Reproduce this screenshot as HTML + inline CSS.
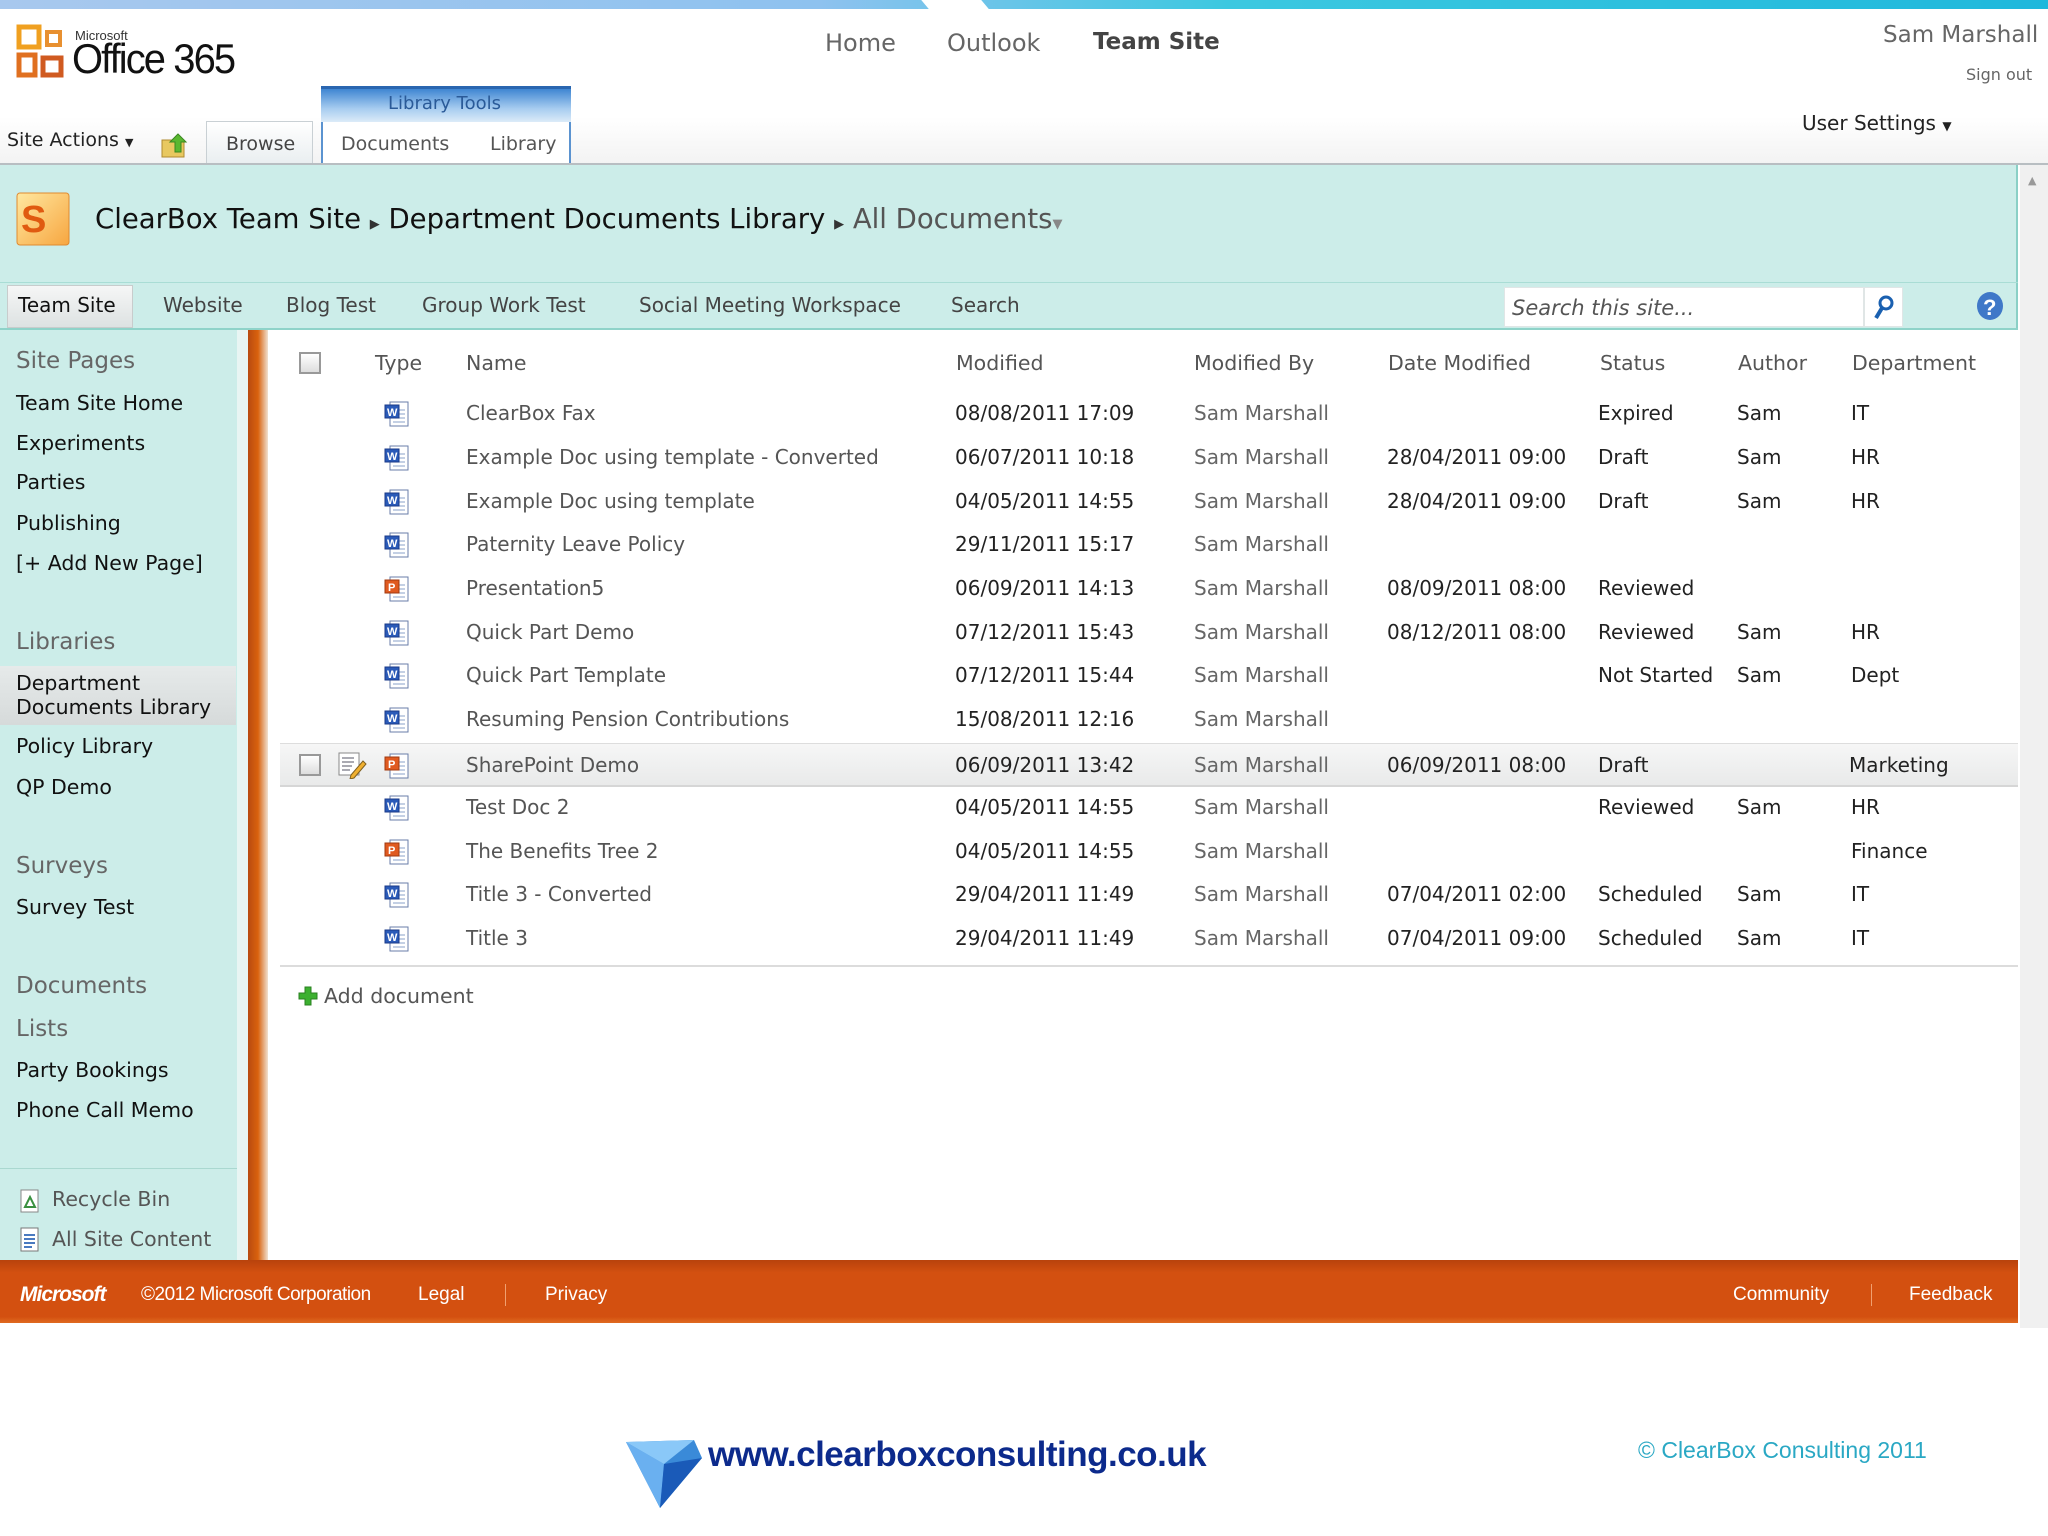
<!DOCTYPE html>
<html><head><meta charset="utf-8">
<style>
*{margin:0;padding:0;box-sizing:border-box}
body{width:2048px;height:1536px;position:relative;background:#fff;font-family:"DejaVu Sans",Verdana,sans-serif;overflow:hidden;color:#222}
.a{position:absolute;white-space:nowrap}
.seg{font-family:"Liberation Sans",sans-serif}
.nav .a{font-size:20px;color:#444;top:293px}
.ln{font-size:20.5px;color:#111;left:16px}
.lh{font-size:23px;color:#666;left:16px}
.row{position:absolute;left:280px;width:1738px;height:44px;font-size:20px}
.row span{position:absolute;top:9px;white-space:nowrap}
.c1{left:186px;color:#555}.c2{left:675px;color:#222}.c3{left:914px;color:#666}.c4{left:1107px}.c5{left:1318px}.c6{left:1457px}.c7{left:1571px}
.ic{position:absolute;left:104px;top:8px;width:26px;height:28px}
</style></head><body>
<div class="a" style="left:0;top:0;width:2048px;height:9px;background:linear-gradient(90deg,#a8c8ee,#8ec2ef 40%,#3cc8e0 60%,#1fb8dc)"></div>
<div class="a" style="left:925px;top:0;width:60px;height:9px;background:#fff;transform:skewX(40deg)"></div>
<div class="a" style="left:0;top:9px;width:2048px;height:154px;background:linear-gradient(#fff 70%,#f3f3f3)"></div>
<svg class="a" style="left:16px;top:24px" width="56" height="56" viewBox="0 0 56 56">
<rect x="3" y="3" width="20" height="20" fill="none" stroke="#f0a020" stroke-width="5"/>
<rect x="31" y="8" width="13" height="13" fill="none" stroke="#e89030" stroke-width="4"/>
<rect x="3" y="31" width="16" height="20" fill="none" stroke="#e07020" stroke-width="5"/>
<rect x="27" y="34" width="18" height="17" fill="none" stroke="#d05a20" stroke-width="5"/>
</svg>
<div class="a seg" style="left:75px;top:28px;font-size:13px;color:#333">Microsoft</div>
<div class="a seg" style="left:72px;top:35px;font-size:42px;color:#111;letter-spacing:-2px;transform:scaleX(.95);transform-origin:left">Office 365</div>
<div class="a" style="left:825px;top:29px;font-size:24px;color:#666">Home</div>
<div class="a" style="left:947px;top:29px;font-size:24px;color:#666">Outlook</div>
<div class="a" style="left:1093px;top:29px;font-size:23px;color:#444;font-weight:bold">Team Site</div>
<div class="a" style="left:1883px;top:22px;font-size:23px;color:#666">Sam Marshall</div>
<div class="a" style="left:1966px;top:65px;font-size:16px;color:#666">Sign out</div>
<div class="a" style="left:1802px;top:111px;font-size:20px;color:#222">User Settings <span style="font-size:12px">▼</span></div>
<div class="a" style="left:7px;top:129px;font-size:19px;color:#222">Site Actions <span style="font-size:11px">▼</span></div>
<svg class="a" style="left:160px;top:130px" width="30" height="30"><rect x="2" y="10" width="22" height="17" fill="#e8c860" stroke="#b08a30"/><path d="M18 4 L26 12 H21 V22 H15 V12 H10 Z" fill="#5ab830" stroke="#3a8820"/></svg>
<div class="a" style="left:206px;top:121px;width:107px;height:43px;background:linear-gradient(#fff,#e9eef0);border:1px solid #c9d0d4;border-bottom:none"></div>
<div class="a" style="left:226px;top:133px;font-size:19px;color:#444">Browse</div>
<div class="a" style="left:321px;top:86px;width:250px;height:78px;border:2px solid #5b93d0;border-bottom:none;background:#fff"></div>
<div class="a" style="left:321px;top:86px;width:250px;height:36px;background:linear-gradient(#3f86d2,#a8cdf0 60%,#dcebf8);border-top:3px solid #2a66b0"></div>
<div class="a" style="left:388px;top:93px;font-size:18px;color:#2a5a98">Library Tools</div>
<div class="a" style="left:341px;top:133px;font-size:19px;color:#555">Documents</div>
<div class="a" style="left:490px;top:133px;font-size:19px;color:#555">Library</div>
<div class="a" style="left:0;top:163px;width:2048px;height:2px;background:#b8bec2"></div>
<div class="a" style="left:0;top:165px;width:2018px;height:165px;background:#ccede9;border-right:2px solid #8ad0c6"></div>
<svg class="a" style="left:16px;top:192px" width="56" height="56"><defs><linearGradient id="g" x1="0" y1="0" x2="1" y2="1"><stop offset="0" stop-color="#ffe8a0"/><stop offset="1" stop-color="#f7a640"/></linearGradient></defs><rect x="1" y="1" width="52" height="52" rx="3" fill="url(#g)" stroke="#e08a30"/><text x="5" y="40" font-family="Liberation Sans" font-weight="bold" font-size="38" fill="#e05a10">S</text></svg>
<div class="a" style="left:95px;top:203px;font-size:27.5px;color:#111">ClearBox Team Site <span style="font-size:13px;color:#333">▶</span> Department Documents Library <span style="font-size:13px;color:#333">▶</span> <span style="color:#555">All Documents</span><span style="font-size:13px;color:#888">▼</span></div>
<div class="a" style="left:0;top:282px;width:2018px;height:1px;background:#a9ddd5"></div>
<div class="a" style="left:0;top:328px;width:2018px;height:2px;background:#8fd3c9"></div>
<div class="nav">
<div class="a" style="left:7px;top:285px;width:126px;height:43px;background:linear-gradient(#f6f6f6,#dde2e2);border:1px solid #c8cccc"></div>
<div class="a" style="left:18px;color:#111">Team Site</div>
<div class="a" style="left:163px">Website</div>
<div class="a" style="left:286px">Blog Test</div>
<div class="a" style="left:422px">Group Work Test</div>
<div class="a" style="left:639px">Social Meeting Workspace</div>
<div class="a" style="left:951px">Search</div>
</div>
<div class="a" style="left:1504px;top:287px;width:360px;height:40px;background:#fff;border:1px solid #e0e6e6"></div>
<div class="a" style="left:1512px;top:296px;font-size:21px;color:#555;font-style:italic">Search this site...</div>
<div class="a" style="left:1864px;top:287px;width:39px;height:40px;background:#fff;border:1px solid #e0e6e6"></div>
<svg class="a" style="left:1872px;top:293px" width="24" height="28"><circle cx="14" cy="10" r="6" fill="none" stroke="#1a60b0" stroke-width="3"/><path d="M10 15 L4 25" stroke="#1a60b0" stroke-width="4"/></svg>
<svg class="a" style="left:1976px;top:291px" width="28" height="30"><ellipse cx="14" cy="15" rx="13" ry="14" fill="#3f78c8"/><text x="7" y="24" font-family="Liberation Sans" font-weight="bold" font-size="22" fill="#fff">?</text></svg>
<div class="a" style="left:2020px;top:165px;width:28px;height:1163px;background:#f0f0f0"></div>
<div class="a" style="left:2028px;top:174px;font-size:11px;color:#999">▲</div>
<div class="a" style="left:0;top:330px;width:237px;height:930px;background:#ccede9"></div>
<div class="a" style="left:237px;top:330px;width:11px;height:930px;background:#e8f5f3"></div>
<div class="a" style="left:248px;top:330px;width:20px;height:930px;background:linear-gradient(90deg,#b84a10,#d9620e 50%,#f0e0d0)"></div>
<div class="a lh" style="top:348px">Site Pages</div>
<div class="a ln" style="top:391px">Team Site Home</div>
<div class="a ln" style="top:431px">Experiments</div>
<div class="a ln" style="top:470px">Parties</div>
<div class="a ln" style="top:511px">Publishing</div>
<div class="a ln" style="top:551px">[+ Add New Page]</div>
<div class="a lh" style="top:629px">Libraries</div>
<div class="a" style="left:0;top:666px;width:236px;height:59px;background:linear-gradient(#e6eaea,#d6dada)"></div>
<div class="a ln" style="top:671px;line-height:24px">Department<br>Documents Library</div>
<div class="a ln" style="top:734px">Policy Library</div>
<div class="a ln" style="top:775px">QP Demo</div>
<div class="a lh" style="top:853px">Surveys</div>
<div class="a ln" style="top:895px">Survey Test</div>
<div class="a lh" style="top:973px">Documents</div>
<div class="a lh" style="top:1016px">Lists</div>
<div class="a ln" style="top:1058px">Party Bookings</div>
<div class="a ln" style="top:1098px">Phone Call Memo</div>
<div class="a" style="left:0;top:1168px;width:237px;height:1px;background:#aad8d0"></div>
<svg class="a" style="left:18px;top:1186px" width="24" height="28"><rect x="3" y="4" width="17" height="22" fill="#fff" stroke="#888"/><path d="M7 21 L12 11 L17 21Z" fill="none" stroke="#3a9040" stroke-width="2"/></svg>
<div class="a" style="left:52px;top:1187px;font-size:20.5px;color:#555">Recycle Bin</div>
<svg class="a" style="left:18px;top:1226px" width="24" height="28"><rect x="3" y="2" width="17" height="23" fill="#fff" stroke="#777"/><path d="M6 9h11M6 13h11M6 17h11M6 21h8" stroke="#4a7ac0" stroke-width="2"/></svg>
<div class="a" style="left:52px;top:1227px;font-size:20.5px;color:#555">All Site Content</div>
<div class="a" style="left:270px;top:330px;width:1748px;height:930px;background:#fff"></div>
<div class="a" style="left:299px;top:352px;width:22px;height:22px;border:2px solid #999;background:linear-gradient(#fff,#ddd)"></div>
<div class="a" style="left:375px;top:351px;font-size:20.5px;color:#555">Type</div>
<div class="a" style="left:466px;top:351px;font-size:20.5px;color:#555">Name</div>
<div class="a" style="left:956px;top:351px;font-size:20.5px;color:#555">Modified</div>
<div class="a" style="left:1194px;top:351px;font-size:20.5px;color:#555">Modified By</div>
<div class="a" style="left:1388px;top:351px;font-size:20.5px;color:#555">Date Modified</div>
<div class="a" style="left:1600px;top:351px;font-size:20.5px;color:#555">Status</div>
<div class="a" style="left:1738px;top:351px;font-size:20.5px;color:#555">Author</div>
<div class="a" style="left:1852px;top:351px;font-size:20.5px;color:#555">Department</div>

<svg width="0" height="0" style="position:absolute"><defs>
<g id="w"><rect x="6" y="2" width="18" height="24" fill="#fff" stroke="#6a7ea8"/><path d="M13 10h8M13 14h8M13 18h8M9 22h12" stroke="#8aa0c8"/><rect x="1" y="5" width="14" height="13" fill="#2a5ab8" stroke="#1a3a88"/><text x="3" y="16" font-size="11" font-weight="bold" fill="#fff" font-family="Liberation Sans">W</text></g>
<g id="p"><rect x="6" y="2" width="18" height="24" fill="#fff" stroke="#6a7ea8"/><path d="M13 10h8M13 14h8M13 18h8M9 22h12" stroke="#8aa0c8"/><rect x="1" y="5" width="14" height="13" fill="#e05a20" stroke="#a03a10"/><text x="4" y="16" font-size="11" font-weight="bold" fill="#fff" font-family="Liberation Sans">P</text></g>
</defs></svg>

<div class="row" style="top:392px"><svg class="ic"><use href="#w"/></svg><span class="c1">ClearBox Fax</span><span class="c2">08/08/2011 17:09</span><span class="c3">Sam Marshall</span><span class="c5">Expired</span><span class="c6">Sam</span><span class="c7">IT</span></div>
<div class="row" style="top:436px"><svg class="ic"><use href="#w"/></svg><span class="c1">Example Doc using template - Converted</span><span class="c2">06/07/2011 10:18</span><span class="c3">Sam Marshall</span><span class="c4">28/04/2011 09:00</span><span class="c5">Draft</span><span class="c6">Sam</span><span class="c7">HR</span></div>
<div class="row" style="top:480px"><svg class="ic"><use href="#w"/></svg><span class="c1">Example Doc using template</span><span class="c2">04/05/2011 14:55</span><span class="c3">Sam Marshall</span><span class="c4">28/04/2011 09:00</span><span class="c5">Draft</span><span class="c6">Sam</span><span class="c7">HR</span></div>
<div class="row" style="top:523px"><svg class="ic"><use href="#w"/></svg><span class="c1">Paternity Leave Policy</span><span class="c2">29/11/2011 15:17</span><span class="c3">Sam Marshall</span></div>
<div class="row" style="top:567px"><svg class="ic"><use href="#p"/></svg><span class="c1">Presentation5</span><span class="c2">06/09/2011 14:13</span><span class="c3">Sam Marshall</span><span class="c4">08/09/2011 08:00</span><span class="c5">Reviewed</span></div>
<div class="row" style="top:611px"><svg class="ic"><use href="#w"/></svg><span class="c1">Quick Part Demo</span><span class="c2">07/12/2011 15:43</span><span class="c3">Sam Marshall</span><span class="c4">08/12/2011 08:00</span><span class="c5">Reviewed</span><span class="c6">Sam</span><span class="c7">HR</span></div>
<div class="row" style="top:654px"><svg class="ic"><use href="#w"/></svg><span class="c1">Quick Part Template</span><span class="c2">07/12/2011 15:44</span><span class="c3">Sam Marshall</span><span class="c5">Not Started</span><span class="c6">Sam</span><span class="c7">Dept</span></div>
<div class="row" style="top:698px"><svg class="ic"><use href="#w"/></svg><span class="c1">Resuming Pension Contributions</span><span class="c2">15/08/2011 12:16</span><span class="c3">Sam Marshall</span></div>
<div class="row" style="top:743px;background:linear-gradient(#f6f6f6,#e9eaea);border-top:1px solid #ddd;border-bottom:2px solid #d6d6d6"><div style="position:absolute;left:19px;top:10px;width:22px;height:22px;border:2px solid #999;background:linear-gradient(#fff,#ddd)"></div><svg style="position:absolute;left:57px;top:7px" width="30" height="28"><rect x="2" y="2" width="20" height="22" fill="#fff" stroke="#888"/><path d="M5 7h12M5 11h12M5 15h10M5 19h8" stroke="#556"/><path d="M14 24 L26 10 L29 13 L17 27 L13 28Z" fill="#f0b030" stroke="#806020"/></svg><svg class="ic"><use href="#p"/></svg><span class="c1">SharePoint Demo</span><span class="c2">06/09/2011 13:42</span><span class="c3">Sam Marshall</span><span class="c4">06/09/2011 08:00</span><span class="c5">Draft</span><span class="c7" style="left:1569px">Marketing</span></div>
<div class="row" style="top:786px"><svg class="ic"><use href="#w"/></svg><span class="c1">Test Doc 2</span><span class="c2">04/05/2011 14:55</span><span class="c3">Sam Marshall</span><span class="c5">Reviewed</span><span class="c6">Sam</span><span class="c7">HR</span></div>
<div class="row" style="top:830px"><svg class="ic"><use href="#p"/></svg><span class="c1">The Benefits Tree 2</span><span class="c2">04/05/2011 14:55</span><span class="c3">Sam Marshall</span><span class="c7">Finance</span></div>
<div class="row" style="top:873px"><svg class="ic"><use href="#w"/></svg><span class="c1">Title 3 - Converted</span><span class="c2">29/04/2011 11:49</span><span class="c3">Sam Marshall</span><span class="c4">07/04/2011 02:00</span><span class="c5">Scheduled</span><span class="c6">Sam</span><span class="c7">IT</span></div>
<div class="row" style="top:917px"><svg class="ic"><use href="#w"/></svg><span class="c1">Title 3</span><span class="c2">29/04/2011 11:49</span><span class="c3">Sam Marshall</span><span class="c4">07/04/2011 09:00</span><span class="c5">Scheduled</span><span class="c6">Sam</span><span class="c7">IT</span></div>
<div class="a" style="left:280px;top:965px;width:1738px;height:2px;background:#dcdcdc"></div>
<svg class="a" style="left:298px;top:986px" width="20" height="20"><path d="M7 1h6v6h6v6h-6v6H7v-6H1V7h6z" fill="#3cb030" stroke="#2a8020"/></svg>
<div class="a" style="left:324px;top:984px;font-size:20.5px;color:#555">Add document</div>
<div class="a" style="left:0;top:1260px;width:2018px;height:63px;background:linear-gradient(#b8420c,#d35010 20%,#d35010 90%,#e06a20)"></div>
<div class="a seg" style="left:20px;top:1283px;font-size:21px;color:#fff;font-weight:bold;font-style:italic;letter-spacing:-1px">Microsoft</div>
<div class="a seg" style="left:141px;top:1284px;font-size:19px;color:#fff;letter-spacing:-.5px">©2012 Microsoft Corporation</div>
<div class="a seg" style="left:418px;top:1284px;font-size:19px;color:#fff">Legal</div>
<div class="a" style="left:505px;top:1284px;width:1px;height:22px;background:#f0a070"></div>
<div class="a seg" style="left:545px;top:1284px;font-size:19px;color:#fff">Privacy</div>
<div class="a seg" style="left:1733px;top:1284px;font-size:19px;color:#fff">Community</div>
<div class="a" style="left:1871px;top:1284px;width:1px;height:22px;background:#f0a070"></div>
<div class="a seg" style="left:1909px;top:1284px;font-size:19px;color:#fff">Feedback</div>
<svg class="a" style="left:624px;top:1438px" width="80" height="72"><path d="M2 4 L70 2 L78 20 L36 70 Z" fill="#3a8ad8"/><path d="M2 4 L36 70 L40 26Z" fill="#6ab0f0"/><path d="M40 26 L78 20 L36 70Z" fill="#1a5ab8"/><path d="M2 4 L70 2 L40 26Z" fill="#8ac8f8"/></svg>
<div class="a seg" style="left:708px;top:1435px;font-size:35px;font-weight:bold;color:#0c2a8c;letter-spacing:-.5px">www.clearboxconsulting.co.uk</div>
<div class="a seg" style="left:1638px;top:1437px;font-size:23px;color:#2aa8c4">© ClearBox Consulting 2011</div>
</body></html>
